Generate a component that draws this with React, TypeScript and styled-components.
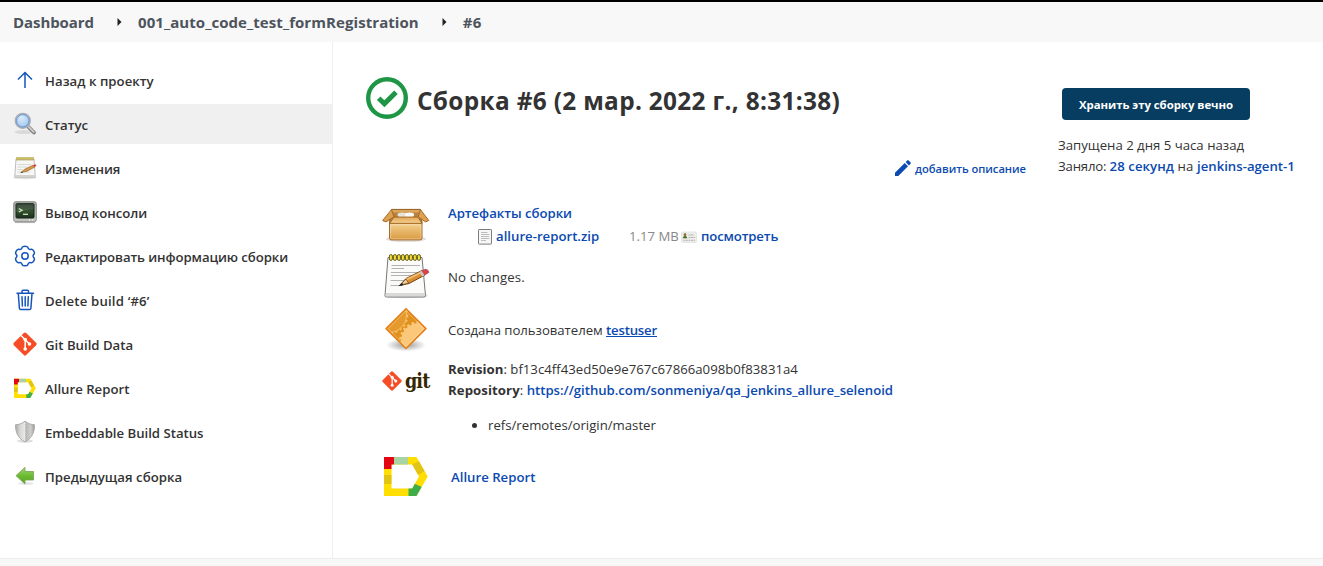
import React, { useId } from "react";
import styled, { createGlobalStyle, css } from "styled-components";

const GlobalStyle = createGlobalStyle`
  *, *::before, *::after { box-sizing: border-box; }
  body {
    margin: 0;
    background: #fff;
    color: #333;
    font: 400 13.2px/21px "Open Sans", "Noto Sans", sans-serif;
    overflow: hidden;
  }
  svg { display: block; flex: none; }
`;

type Tracking = { $track?: number };
const tracking = css<Tracking>`
  letter-spacing: ${(p) => p.$track ?? 0}px;
  white-space: nowrap;
`;

const Page = styled.div`
  display: flex;
  flex-direction: column;
  height: 566px;
`;
const Breadcrumbs = styled.header`
  display: flex;
  align-items: center;
  height: 42px;
  padding: 0 0 0 13px;
  border-top: 2px solid #000;
  background: #f8f8f8;
  color: #4d545d;
  font-size: 15px;
  font-weight: 700;
`;
const Crumb = styled.span<Tracking>`${tracking}`;
const Separator = styled.span`
  display: flex;
  justify-content: center;
  width: 44px;
  padding: 0 0 1px 7px;
`;
const Body = styled.div`
  display: flex;
  flex: 1;
`;
const Sidebar = styled.nav`
  display: flex;
  flex-direction: column;
  gap: 4px;
  width: 333px;
  padding-top: 18px;
  border-right: 1px solid #eeeff0;
`;
const Task = styled.a<{ $active?: boolean }>`
  display: flex;
  align-items: center;
  gap: 8px;
  height: 40px;
  padding: 0 0 0 13px;
  background: ${(p) => (p.$active ? "#f0f0f0" : "transparent")};
  font-weight: 600;
  svg { margin-bottom: 1px; }
`;
const TaskLabel = styled.span<Tracking>`
  ${tracking}
  padding-top: 2px;
`;
const Main = styled.main`
  display: flex;
  flex: 1;
`;
const Content = styled.section`
  width: 693px;
  padding: 35px 0 0 33px;
`;
const Title = styled.h1<Tracking>`
  display: flex;
  align-items: center;
  gap: 9px;
  height: 42px;
  margin: 0;
  font-size: 24.4px;
  font-weight: 700;
  line-height: 32px;
  ${tracking}
  span { padding-top: 5px; }
`;
const DescriptionBar = styled.div`
  display: flex;
  justify-content: flex-end;
  margin-top: 39px;
`;
const EditLink = styled.a<Tracking>`
  display: flex;
  align-items: center;
  gap: 4px;
  height: 21px;
  color: #0b4ab0;
  font-size: 11.2px;
  font-weight: 600;
  ${tracking}
  svg { margin-bottom: 2px; }
`;
const Details = styled.div`
  display: flex;
  flex-direction: column;
  padding: 20px 0 0 16px;
`;
const Row = styled.div<{ $height: number; $gap?: number }>`
  display: flex;
  gap: ${(p) => p.$gap ?? 18}px;
  height: ${(p) => p.$height}px;
`;
const Cell = styled.div<{ $top: number }>`
  padding-top: ${(p) => p.$top}px;
`;
const Line = styled.div`
  display: flex;
  align-items: center;
  height: 21px;
`;
const FileLine = styled(Line)`
  height: 25px;
  padding-left: 30px;
`;
const Text = styled.span<Tracking>`${tracking}`;
const Strong = styled.b<Tracking>`${tracking}`;
const Link = styled.a<Tracking & { $underline?: boolean }>`
  ${tracking}
  color: #0b4ab0;
  font-weight: 600;
  text-decoration: ${(p) => (p.$underline ? "underline" : "none")};
`;
const FileLink = styled(Link)`
  width: 133px;
  margin-left: 2px;
`;
const Size = styled(Text)`
  width: 52px;
  color: #888;
`;
const ViewLink = styled(Link)`
  margin-left: 4px;
`;
const RefList = styled.ul`
  margin: 14px 0 0;
  padding-left: 40px;
`;
const Logo = styled.div`
  display: flex;
  gap: 3px;
  width: 48px;
  height: 48px;
  padding-top: 15px;
`;
const LogoWord = styled.span`
  margin-top: -1px;
  color: #362701;
  font: 700 19.5px/24px "DejaVu Serif Condensed", "DejaVu Serif", serif;
  font-stretch: condensed;
  letter-spacing: -0.9px;
`;
const Aside = styled.aside`
  padding: 46px 0 0 32px;
`;
const KeepButton = styled.button<Tracking>`
  display: block;
  width: 188px;
  height: 32px;
  margin: 0 0 15px 4px;
  padding: 1px 0 0;
  border: 0;
  border-radius: 4px;
  background: #063d60;
  color: #fff;
  font: 700 11.4px/20px "Open Sans", sans-serif;
  ${tracking}
`;
const Footer = styled.footer`
  height: 8px;
  border-top: 1px solid #ebecee;
  background: #f8f8f8;
`;

const Chevron = () => (
  <svg width="5" height="8" viewBox="0 0 5 8"><path d="M0.5 0L4.5 4L0.5 8z" fill="#222" /></svg>
);
const ArrowUp = () => (
  <svg width="24" height="24" viewBox="0 0 24 24" fill="none" stroke="#1556bd" strokeWidth="1.5">
    <path d="M12 20V5M5 11.5L12 4.5L19 11.5" />
  </svg>
);
const Magnifier = () => (
  <svg width="24" height="24" viewBox="0 0 24 24">
    <defs>
      <radialGradient id="lens" cx=".4" cy=".3" r=".8"><stop offset="0" stopColor="#d9ebfb" /><stop offset=".6" stopColor="#b3d1f0" /><stop offset="1" stopColor="#8cb6e4" /></radialGradient>
    </defs>
    <ellipse cx="11" cy="20" rx="9.5" ry="2" fill="#000" opacity=".09" />
    <path d="M15 14.5L21 20.5" stroke="#777" strokeWidth="3.8" strokeLinecap="round" />
    <path d="M15.5 14.8L20.8 20" stroke="#c8c8c8" strokeWidth="2" strokeLinecap="round" />
    <circle cx="9.8" cy="8.8" r="7.4" fill="url(#lens)" stroke="#a9adb1" strokeWidth="1.5" />
    <circle cx="9.8" cy="8.8" r="6.2" fill="none" stroke="#5e8fcb" strokeWidth=".9" />
  </svg>
);
const NotepadSmall = () => (
  <svg width="24" height="24" viewBox="0 0 24 24">
    <ellipse cx="12" cy="22" rx="11" ry="1.2" fill="#000" opacity=".12" />
    <path d="M3 3H21L22.3 21.5H1.7z" fill="#f6f6f5" stroke="#bdbdba" />
    <path d="M2 19H22L22.3 21.5H1.7z" fill="#d2d2cf" />
    <path d="M4.5 8.5H18M4.5 11H14M4.5 13.5H10M4.5 16H17" stroke="#d8d8d6" strokeWidth="1" />
    <path d="M4 1V4.6M6 1V4.6M8 1V4.6M10 1V4.6M12 1V4.6M14 1V4.6M16 1V4.6M18 1V4.6M20 1V4.6" stroke="#a8983a" strokeWidth="1.2" />
    <path d="M3.2 2.4H20.8" stroke="#d5c24f" />
    <path d="M8 16.5L12 13L20 9.2L21.8 11L14 15.2z" fill="#d89a4a" stroke="#8a5a22" strokeWidth=".6" />
    <path d="M19.8 9.2L22.5 8.3L23.5 9.8L21.3 11.3z" fill="#dc4141" />
    <path d="M7.2 17.3L9 15.5L9.9 16.5z" fill="#333" />
  </svg>
);
const Terminal = () => (
  <svg width="24" height="24" viewBox="0 0 24 24">
    <defs>
      <linearGradient id="screen" x1="0" y1="0" x2="0" y2="1"><stop offset="0" stopColor="#26382a" /><stop offset=".5" stopColor="#35502f" /><stop offset="1" stopColor="#1c2e1c" /></linearGradient>
      <linearGradient id="case" x1="0" y1="0" x2="0" y2="1"><stop offset="0" stopColor="#a4a9a2" /><stop offset="1" stopColor="#c4c7c1" /></linearGradient>
    </defs>
    <path d="M2 22.4H22" stroke="#bbb" strokeWidth="1.4" />
    <rect x=".7" y="1.7" width="22.6" height="20" rx="2" fill="url(#case)" stroke="#8d918b" />
    <rect x="3" y="3.7" width="18" height="14.3" rx="1" fill="url(#screen)" stroke="#1b251c" />
    <path d="M3.5 4.2H20.5V9C14 9.5 9 11 3.5 12.5z" fill="#fff" opacity=".1" />
    <path d="M5.8 8.5L9 10.2L5.8 12" fill="none" stroke="#c7e9b8" strokeWidth="1.3" />
    <path d="M10 14.3H15" stroke="#c7e9b8" strokeWidth="1.3" />
    <circle cx="16.5" cy="19.9" r=".6" fill="#fff" /><circle cx="19.5" cy="19.9" r=".6" fill="#fff" />
  </svg>
);
const Gear = () => (
  <svg width="24" height="24" viewBox="0 0 24 24" fill="none" stroke="#1556bd" strokeWidth="1.5" strokeLinejoin="round">
    <circle cx="12" cy="12" r="3.2" />
    <path d="M9.2 3.2C9.7 1.8 14.3 1.8 14.8 3.2C15.2 5.2 16.4 5.8 18.2 5.2C19.8 4.8 22.1 8.7 21.2 9.9C19.7 11.3 19.7 12.7 21.2 14.1C22.1 15.3 19.8 19.2 18.2 18.8C16.4 18.2 15.2 18.8 14.8 20.8C14.3 22.2 9.7 22.2 9.2 20.8C8.8 18.8 7.6 18.2 5.8 18.8C4.2 19.2 1.9 15.3 2.8 14.1C4.3 12.7 4.3 11.3 2.8 9.9C1.9 8.7 4.2 4.8 5.8 5.2C7.6 5.8 8.8 5.2 9.2 3.2z" />
  </svg>
);
const Trash = () => (
  <svg width="24" height="24" viewBox="0 0 24 24" fill="none" stroke="#1556bd" strokeWidth="1.5" strokeLinejoin="round" strokeLinecap="round">
    <path d="M4 5.2H20.5M9 5V3.3Q9 2.2 10 2.2H14.5Q15.5 2.2 15.5 3.3V5M5.3 5.5L6.4 20.3Q6.5 21.5 7.6 21.5H16.7Q17.8 21.5 17.9 20.3L19 5.5M9 8.7L9.4 18M12.2 8.7V18M15.3 8.7L14.9 18" />
  </svg>
);
const GitMark = ({ size }: { size: number }) => (
  <svg width={size} height={size} viewBox="0 0 24 24">
    <path d="M12 .4Q12.7 .4 13.2 .9L23.1 10.8Q24.2 12 23.1 13.2L13.2 23.1Q12 24.2 10.8 23.1L.9 13.2Q-.2 12 .9 10.8L10.8 .9Q11.3 .4 12 .4z" fill="#f64d27" />
    <path d="M8 3.5L12.2 7.7V17.3M12.2 7.7L16.4 12" fill="none" stroke="#fff" strokeWidth="1.5" />
    <circle cx="12.2" cy="7.6" r="1.8" fill="#fff" /><circle cx="12.2" cy="17" r="1.8" fill="#fff" /><circle cx="16.5" cy="12" r="1.8" fill="#fff" />
  </svg>
);
const AllureIcon = ({ size }: { size: number }) => {
  const ring = useId();
  return (
    <svg width={size} height={size} viewBox="0 0 48 48">
      <defs>
        <clipPath id={ring}>
          <path clipRule="evenodd" d="M2 5H34.5L45.7 24.5L34.5 44H2zM9.5 12.5V36.5H30.2L37 24.5L30.2 12.5z" />
        </clipPath>
      </defs>
      <g clipPath={`url(#${ring})`}>
        <path d="M0 0H48V48H0z" fill="#ffde00" />
        <path d="M0 0H12V17H0z" fill="#e30613" />
        <path d="M12 0H26V14H12z" fill="#a7d3a5" />
        <path d="M29 13L40.5 7.5L44 18.5L33.5 24z" fill="#e2c514" />
        <path d="M0 23H12V32H0z" fill="#e2c514" />
        <path d="M26.5 48V34L31 31L42 36L36 48z" fill="#3fae49" />
      </g>
    </svg>
  );
};
const Shield = () => (
  <svg width="24" height="24" viewBox="0 0 24 24">
    <defs><linearGradient id="shield"><stop offset="0" stopColor="#aaa" /><stop offset=".25" stopColor="#d8d8d6" /><stop offset=".5" stopColor="#e8e8e6" /><stop offset=".52" stopColor="#b4b4b2" /><stop offset=".8" stopColor="#cfcfcd" /><stop offset="1" stopColor="#9a9a98" /></linearGradient></defs>
    <ellipse cx="12" cy="21" rx="8" ry="1.8" fill="#000" opacity=".12" />
    <path d="M12 1.2C9 3.6 6 4.6 2.5 4.8C2.4 11.5 4.5 18 12 22C19.5 18 21.6 11.5 21.5 4.8C18 4.6 15 3.6 12 1.2z" fill="url(#shield)" stroke="#a5a5a3" strokeWidth=".9" />
    <path d="M12 3V21" stroke="#eee" strokeWidth="1" strokeDasharray="1.2 1" />
  </svg>
);
const ArrowBack = () => (
  <svg width="24" height="24" viewBox="0 0 24 24">
    <defs><linearGradient id="back" x1="0" y1="0" x2="0" y2="1"><stop offset="0" stopColor="#9bd565" /><stop offset=".5" stopColor="#6dbb35" /><stop offset="1" stopColor="#55a51f" /></linearGradient></defs>
    <ellipse cx="13" cy="19.5" rx="8" ry="1.4" fill="#000" opacity=".1" />
    <path d="M3 11.7L12 3.4V7.5H20.5V16H12V20z" fill="url(#back)" stroke="#7da85c" strokeWidth=".9" strokeLinejoin="round" />
  </svg>
);
const Success = () => (
  <svg width="42" height="42" viewBox="0 0 42 42" fill="none" stroke="#1e9645">
    <circle cx="21" cy="21" r="18.8" strokeWidth="4.4" />
    <path d="M12.7 21.3L18.4 26.8L30 15.2" strokeWidth="5" />
  </svg>
);
const Pencil = () => (
  <svg width="16" height="16" viewBox="0 0 16 16" fill="#0b4ab0">
    <path d="M0 12.7V16H3.3L13 6.3L9.7 3zM15.6 3.7Q16.2 3 15.6 2.4L13.6 .4Q13 -.2 12.3 .4L10.6 2.1L13.9 5.4z" />
  </svg>
);
const Package = () => (
  <svg width="48" height="48" viewBox="0 0 48 48">
    <defs>
      <linearGradient id="front" x1="0" y1="0" x2="0" y2="1"><stop offset="0" stopColor="#f6d595" /><stop offset="1" stopColor="#d99a40" /></linearGradient>
      <linearGradient id="flap" x1="0" y1="0" x2="0" y2="1"><stop offset="0" stopColor="#e2a75b" /><stop offset="1" stopColor="#f3cf90" /></linearGradient>
    </defs>
    <g transform="translate(0 .9)">
      <ellipse cx="24" cy="39" rx="20" ry="3.2" fill="#000" opacity=".12" />
      <path d="M9.5 9.5H38.5L40 23H7.5z" fill="#b98140" stroke="#95601f" strokeWidth="1" />
      <path d="M10 10H38L38.4 12.5H9.7z" fill="#dba65c" />
      <ellipse cx="20.5" cy="15" rx="5" ry="2.4" fill="#e7e3d9" /><ellipse cx="27.5" cy="15" rx="4.6" ry="2.4" fill="#faf9f5" />
      <path d="M9.5 9.8L.6 20.6L4 22L12 16.8z" fill="#dda150" stroke="#a56a25" strokeLinejoin="round" />
      <path d="M38.5 9.8L46.8 20.6L43.6 22L36 16.8z" fill="#dda150" stroke="#a56a25" strokeLinejoin="round" />
      <path d="M7.5 22H40V38Q40 40 38 40H9.5Q7.5 40 7.5 38z" fill="url(#front)" stroke="#a56a25" />
      <path d="M12 17.2H36L40 23.5H7.5z" fill="url(#flap)" stroke="#a56a25" strokeLinejoin="round" />
      <path d="M8.5 25H39V37.5Q39 39 37.5 39H10Q8.5 39 8.5 37.5z" fill="none" stroke="#fff" opacity=".35" />
    </g>
  </svg>
);
const Notepad = () => (
  <svg width="48" height="48" viewBox="0 0 48 48">
    <ellipse cx="24" cy="43.8" rx="22" ry="2.4" fill="#000" opacity=".13" />
    <path d="M6 5.5H40L43.5 43.5Q43.5 45 42 45H4.5Q3 45 3 43.5z" fill="#fbfbfa" stroke="#777" />
    <path d="M3.9 41L42.7 41L43 44H3.6z" fill="#d9d9d7" />
    <path d="M9.5 13.5H38M9.5 16.5H22M9 20.5H37M9 23.5H33M8.5 28.5H24M8.5 33.5H18" stroke="#b3b3b3" strokeWidth="1.1" />
    {[8, 12, 16, 20, 24, 28, 32, 36].map((x) => (
      <rect key={x} x={x - 0.6} y="2.6" width="3" height="5.8" rx="1.4" fill="#f3df3e" stroke="#5c5310" strokeWidth=".9" />
    ))}
    <path d="M17.5 33.5L24 26.5L40 18.5L43 23L27 31.5z" fill="#d88d32" stroke="#70440f" />
    <path d="M24 26.8L40 19L41 20.5L24.5 28.8z" fill="#f2bd73" />
    <path d="M39 19L43.5 17.2Q46.5 17.5 46.8 20.5L42 23.5z" fill="#e23f46" stroke="#8b5354" strokeWidth=".7" />
    <path d="M37.3 20L39.5 18.8L42.5 23.3L40.3 24.5z" fill="#c8c8c5" />
    <path d="M17.5 33.5L24 27L26.5 31z" fill="#eccf9c" stroke="#70440f" strokeWidth=".7" />
    <path d="M16.3 34.3L20 30.8L21.6 33z" fill="#222" />
  </svg>
);
const UserCause = () => (
  <svg width="48" height="48" viewBox="0 0 48 48">
    <defs>
      <clipPath id="diamond"><path d="M24 4L43.5 23.5L24 43L4.5 23.5z" /></clipPath>
      <radialGradient id="shadow"><stop offset="0" stopOpacity=".4" /><stop offset="1" stopOpacity="0" /></radialGradient>
    </defs>
    <ellipse cx="24" cy="40" rx="20" ry="6.5" fill="url(#shadow)" />
    <g clipPath="url(#diamond)">
      <path d="M0 0H48V48H0z" fill="#e0901c" />
      <circle cx="7" cy="10" r="17.5" fill="#e69a2c" stroke="#f5c06a" strokeWidth="1" />
      <circle cx="7" cy="10" r="18.5" fill="none" stroke="#f5c06a" strokeWidth="1.6" strokeDasharray="2.4 2.6" />
      <circle cx="37" cy="36" r="18" fill="#fac878" />
      <circle cx="37" cy="36" r="18.7" fill="none" stroke="#fac878" strokeWidth="2.4" strokeDasharray="2.4 2.6" />
    </g>
    <path d="M24 3.7L43.9 23.6L24 43.5L4.1 23.6z" fill="none" stroke="#e58017" strokeWidth="1.6" strokeLinejoin="round" />
    <path d="M24 5.7L41.9 23.6L24 41.5L6.1 23.6z" fill="none" stroke="#fff" opacity=".3" />
  </svg>
);
const FileIcon = () => (
  <svg width="16" height="16" viewBox="0 0 16 16">
    <rect x=".5" y=".5" width="13" height="14.6" rx=".6" fill="#f7f7f7" stroke="#7d7d7d" />
    <path d="M3 3.5H9.5M3 5.5H11.5M3 7.5H11M3 9.5H11.5M3 11.5H8" stroke="#bdbdbd" strokeWidth="1" />
  </svg>
);
const CardIcon = () => (
  <svg width="16" height="16" viewBox="0 0 16 16">
    <rect x=".5" y="3" width="15" height="10.5" rx="1.2" fill="#ededeb" stroke="#deded9" strokeWidth=".7" />
    <circle cx="4" cy="5.7" r="1.4" fill="#8a6b35" />
    <path d="M1.8 9.3Q2 7 4 7Q6 7 6.2 9.3z" fill="#4c641f" />
    <path d="M7.5 6H13M7.5 8.5H14M2.5 11.3H14" stroke="#b5b5b2" strokeWidth="1" strokeDasharray="2 .5" />
  </svg>
);

const tasks = [
  { label: "Назад к проекту", icon: <ArrowUp />, track: 0.04 },
  { label: "Статус", icon: <Magnifier />, active: true },
  { label: "Изменения", icon: <NotepadSmall />, track: -0.15 },
  { label: "Вывод консоли", icon: <Terminal />, track: -0.04 },
  { label: "Редактировать информацию сборки", icon: <Gear />, track: -0.1 },
  { label: "Delete build ‘#6’", icon: <Trash />, track: 0.18 },
  { label: "Git Build Data", icon: <GitMark size={24} /> },
  { label: "Allure Report", icon: <AllureIcon size={24} /> },
  { label: "Embeddable Build Status", icon: <Shield />, track: -0.02 },
  { label: "Предыдущая сборка", icon: <ArrowBack />, track: 0.04 },
];

export default function App() {
  return (
    <Page>
      <GlobalStyle />
      <Breadcrumbs>
        <Crumb $track={-0.07}>Dashboard</Crumb>
        <Separator><Chevron /></Separator>
        <Crumb $track={0.07}>001_auto_code_test_formRegistration</Crumb>
        <Separator><Chevron /></Separator>
        <Crumb $track={0.2}>#6</Crumb>
      </Breadcrumbs>
      <Body>
        <Sidebar>
          {tasks.map((t) => (
            <Task key={t.label} $active={t.active}>{t.icon}<TaskLabel $track={t.track}>{t.label}</TaskLabel></Task>
          ))}
        </Sidebar>
        <Main>
          <Content>
            <Title $track={0.32}><Success /><span>Сборка #6 (2 мар. 2022 г., 8:31:38)</span></Title>
            <DescriptionBar><EditLink $track={-0.04}><Pencil />добавить описание</EditLink></DescriptionBar>
            <Details>
              <Row $height={53}>
                <Package />
                <Cell $top={4}>
                  <Line><Link $track={-0.04}>Артефакты сборки</Link></Line>
                  <FileLine>
                    <FileIcon /><FileLink>allure-report.zip</FileLink>
                    <Size>1.17 MB</Size><CardIcon /><ViewLink $track={-0.15}>посмотреть</ViewLink>
                  </FileLine>
                </Cell>
              </Row>
              <Row $height={53}><Notepad /><Cell $top={15}><Line><Text $track={0.12}>No changes.</Text></Line></Cell></Row>
              <Row $height={51}>
                <UserCause />
                <Cell $top={15}><Line><Text $track={-0.04}>Создана пользователем&nbsp;</Text><Link $underline $track={-0.2}>testuser</Link></Line></Cell>
              </Row>
              <Row $height={96}>
                <Logo><GitMark size={20} /><LogoWord>git</LogoWord></Logo>
                <Cell $top={3}>
                  <Line><Strong>Revision</Strong><Text>:&nbsp;</Text><Text>bf13c4ff43ed50e9e767c67866a098b0f83831a4</Text></Line>
                  <Line><Strong $track={0.08}>Repository</Strong><Text>:&nbsp;</Text><Link $track={-0.03}>https://github.com/sonmeniya/qa_jenkins_allure_selenoid</Link></Line>
                  <RefList><li><Text>refs/remotes/origin/master</Text></li></RefList>
                </Cell>
              </Row>
              <Row $height={48} $gap={21}><AllureIcon size={48} /><Cell $top={15}><Line><Link>Allure Report</Link></Line></Cell></Row>
            </Details>
          </Content>
          <Aside>
            <KeepButton $track={-0.03}>Хранить эту сборку вечно</KeepButton>
            <Line><Text>Запущена 2 дня 5 часа назад</Text></Line>
            <Line><Text $track={-0.18}>Заняло:&nbsp;</Text><Link $track={0.06}>28 секунд</Link><Text $track={0.1}>&nbsp;на&nbsp;</Text><Link>jenkins-agent-1</Link></Line>
          </Aside>
        </Main>
      </Body>
      <Footer />
    </Page>
  );
}
